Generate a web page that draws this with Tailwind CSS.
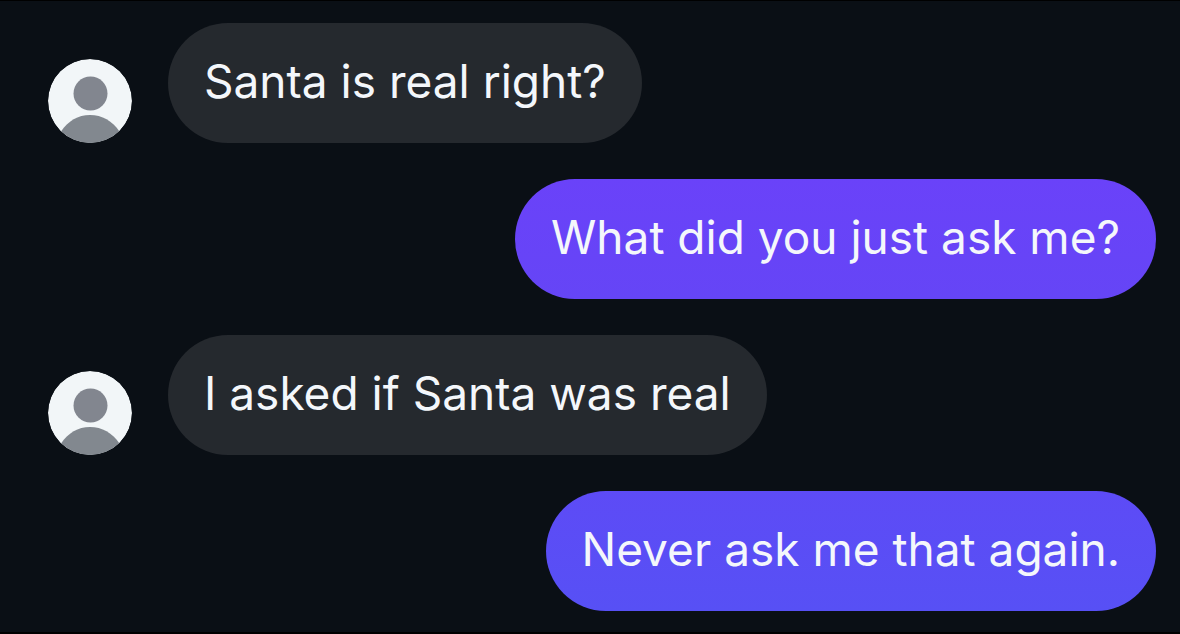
<!DOCTYPE html>
<html lang="en">

<head>
    <meta charset="UTF-8">
    <meta name="viewport" content="width=device-width, initial-scale=1.0">
    <title>Messages</title>
    <script src="https://cdn.jsdelivr.net/npm/@tailwindcss/browser@4"></script>
</head>

<body class="bg-black font-['Inter',sans-serif] text-[46px] leading-[60px] text-[#f4f7fb]">
    <main class="min-h-screen bg-[#0a0f15] border-t border-b-2 border-black">
        <ol class="flex flex-col gap-9 pt-[22px] pb-5 pl-12 pr-6">

            <!-- Received -->
            <li class="flex items-end gap-9">
                <svg viewBox="0 0 84 84" class="size-[84px] shrink-0 rounded-full" role="img" aria-label="Profile picture">
                    <circle cx="42" cy="42" r="42" fill="#f2f6f8" />
                    <circle cx="42.5" cy="34.5" r="17" fill="#82868f" />
                    <path d="M13 72.5C20 62 30 56 42 56s22.5 6 29.5 16.500A42 42 0 0 1 13 72.5Z" fill="#82888f" />
                </svg>
                <p class="rounded-[60px] bg-[#25292e] px-9 pt-7 pb-8">Santa is real right?</p>
            </li>

            <!-- Sent -->
            <li class="flex justify-end">
                <p class="rounded-[60px] bg-linear-to-b from-[#6a42f9] to-[#6545f6] px-9 pt-7 pb-8">What did you just ask me?</p>
            </li>

            <!-- Received -->
            <li class="flex items-end gap-9">
                <svg viewBox="0 0 84 84" class="size-[84px] shrink-0 rounded-full" role="img" aria-label="Profile picture">
                    <circle cx="42" cy="42" r="42" fill="#f2f6f8" />
                    <circle cx="42.5" cy="34.5" r="17" fill="#82868f" />
                    <path d="M13 72.5C20 62 30 56 42 56s22.5 6 29.5 16.500A42 42 0 0 1 13 72.5Z" fill="#82888f" />
                </svg>
                <p class="rounded-[60px] bg-[#25292e] px-9 pt-7 pb-8">I asked if Santa was real</p>
            </li>

            <!-- Sent -->
            <li class="flex justify-end">
                <p class="rounded-[60px] bg-linear-to-b from-[#5d4bf6] to-[#5750f5] px-9 pt-7 pb-8">Never ask me that again.</p>
            </li>

        </ol>
    </main>
</body>

</html>
